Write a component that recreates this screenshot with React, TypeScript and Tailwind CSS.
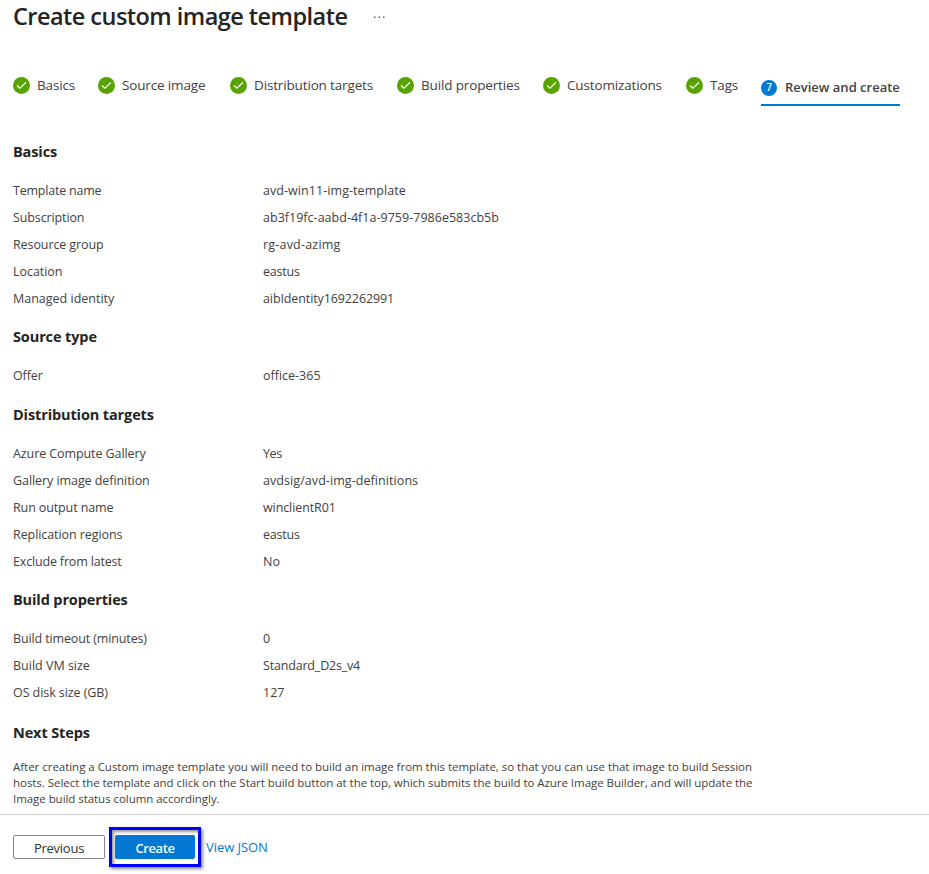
import type { ReactNode } from "react";

type Row = [label: string, value: string, labelTracking?: string, valueTracking?: string];

function Check() {
  return (
    <svg width="17" height="17" viewBox="0 0 17 17" className="shrink-0">
      <circle cx="8.5" cy="8.5" r="8.5" fill="#57a300" />
      <path d="M4 8.6 L6.9 11.2 L13 5.4" fill="none" stroke="#fff" strokeWidth="1.3" />
    </svg>
  );
}

function Step({ width, children }: { width: string; children: ReactNode }) {
  return (
    <div className={`flex h-[17px] shrink-0 items-center ${width}`}>
      <Check />
      <span className="ml-[7px] whitespace-nowrap text-[13.5px] leading-[17px] tracking-[-0.15px]">{children}</span>
    </div>
  );
}

function Heading({ children }: { children: ReactNode }) {
  return <h2 className="h-[20px] whitespace-nowrap text-[14.5px] font-bold leading-[20px] tracking-[-0.12px] text-[#252423]">{children}</h2>;
}

function Section({ title, rows, className }: { title: string; rows: Row[]; className: string }) {
  return (
    <section className={className}>
      <Heading>{title}</Heading>
      <dl className="mt-[15px]">
        {rows.map(([label, value, lt = "", vt = ""]) => (
          <div key={label} className="flex h-[27px] items-center text-[12.5px] leading-[18px]">
            <dt className="w-[250px] shrink-0 whitespace-nowrap"><span className={lt}>{label}</span></dt>
            <dd className="whitespace-nowrap"><span className={vt}>{value}</span></dd>
          </div>
        ))}
      </dl>
    </section>
  );
}

export default function App() {
  return (
    <div className="flex h-[874px] w-[929px] flex-col overflow-hidden bg-white font-['Open_Sans','Noto_Sans',sans-serif] text-[#42413f]">
      <header className="flex h-[34px] items-center pl-[13px]">
        <h1 className="w-[359px] whitespace-nowrap pb-[2px] text-[23.5px] font-semibold leading-[32px] tracking-[-0.54px] text-[#252423]">Create custom image template</h1>
        <svg width="13" height="3" viewBox="0 0 13 3" fill="#605e5c">
          <rect x="2" y="0.5" width="1.5" height="1.5" />
          <rect x="6.5" y="0.5" width="1.5" height="1.5" />
          <rect x="11" y="0.5" width="1.5" height="1.5" />
        </svg>
      </header>
      <nav className="mt-[43px] flex h-[29px] pl-[13px]">
        <Step width="w-[85px]">Basics</Step>
        <Step width="w-[132px]">Source image</Step>
        <Step width="w-[167px]">Distribution targets</Step>
        <Step width="w-[146px]">Build properties</Step>
        <Step width="w-[143px]">Customizations</Step>
        <Step width="w-[75px]">Tags</Step>
        <div className="flex w-[139px] items-center border-b-2 border-[#0078d4] pb-[6px]">
          <span className="flex size-[16px] shrink-0 items-center justify-center rounded-full bg-[#0078d4] text-[10px] font-semibold text-white">7</span>
          <span className="ml-[8px] whitespace-nowrap text-[13px] font-semibold leading-[17px]">Review and create</span>
        </div>
      </nav>
      <main className="h-[708px] pl-[13px] pt-[36px]">
        <Section
          className="h-[185px]"
          title="Basics"
          rows={[
            ["Template name", "avd-win11-img-template", "tracking-[-0.22px]", "tracking-[0.06px]"],
            ["Subscription", "ab3f19fc-aabd-4f1a-9759-7986e583cb5b", "tracking-[-0.12px]", "tracking-[0.02px]"],
            ["Resource group", "rg-avd-azimg", "tracking-[-0.1px]", "tracking-[0.2px]"],
            ["Location", "eastus", "tracking-[-0.05px]", "tracking-[-0.2px]"],
            ["Managed identity", "aibIdentity1692262991", "", "tracking-[-0.11px]"],
          ]}
        />
        <Section className="h-[78px]" title="Source type" rows={[["Offer", "office-365", "tracking-[-0.1px]"]]} />
        <Section
          className="h-[185px]"
          title="Distribution targets"
          rows={[
            ["Azure Compute Gallery", "Yes", "tracking-[-0.09px]", "tracking-[-0.4px]"],
            ["Gallery image definition", "avdsig/avd-img-definitions", "tracking-[-0.07px]", "tracking-[0.07px]"],
            ["Run output name", "winclientR01", "tracking-[-0.12px]", "tracking-[-0.1px]"],
            ["Replication regions", "eastus", "tracking-[-0.08px]", "tracking-[-0.2px]"],
            ["Exclude from latest", "No", "tracking-[-0.17px]"],
          ]}
        />
        <Section
          className="h-[133px]"
          title="Build properties"
          rows={[
            ["Build timeout (minutes)", "0", "tracking-[-0.13px]"],
            ["Build VM size", "Standard_D2s_v4", "", "tracking-[-0.18px]"],
            ["OS disk size (GB)", "127", "tracking-[-0.07px]"],
          ]}
        />
        <Heading>Next Steps</Heading>
        <p className="mt-[16px] whitespace-nowrap text-[11.5px] leading-[16px]">
          <span className="block tracking-[-0.027px]">After creating a Custom image template you will need to build an image from this template, so that you can use that image to build Session</span>
          <span className="block tracking-[-0.044px]">hosts. Select the template and click on the Start build button at the top, which submits the build to Azure Image Builder, and will update the</span>
          <span className="block tracking-[-0.05px]">Image build status column accordingly.</span>
        </p>
      </main>
      <footer className="flex h-[60px] items-start border-t border-[#d2d0ce] pl-[13px]">
        <button className="mt-[20px] h-[24px] w-[92px] rounded-[2px] border border-[#8a8886] text-[13px] leading-[24px] tracking-[-0.25px] text-[#323130]">Previous</button>
        <div className="ml-[4px] mt-[12px] h-[40px] w-[92px] border-[3px] border-[#0000ff] p-[5px_3px] shadow-[2px_2px_3px_rgba(0,0,0,0.45),inset_2px_2px_3px_rgba(0,0,0,0.4)]">
          <button className="block h-[24px] w-[80px] rounded-[2px] bg-[#0078d4] text-[13px] font-semibold leading-[26px] tracking-[-0.4px] text-white">Create</button>
        </div>
        <a className="ml-[5px] mt-[23px] whitespace-nowrap text-[13px] leading-[18px] tracking-[-0.05px] text-[#0078d4]">View JSON</a>
      </footer>
    </div>
  );
}
